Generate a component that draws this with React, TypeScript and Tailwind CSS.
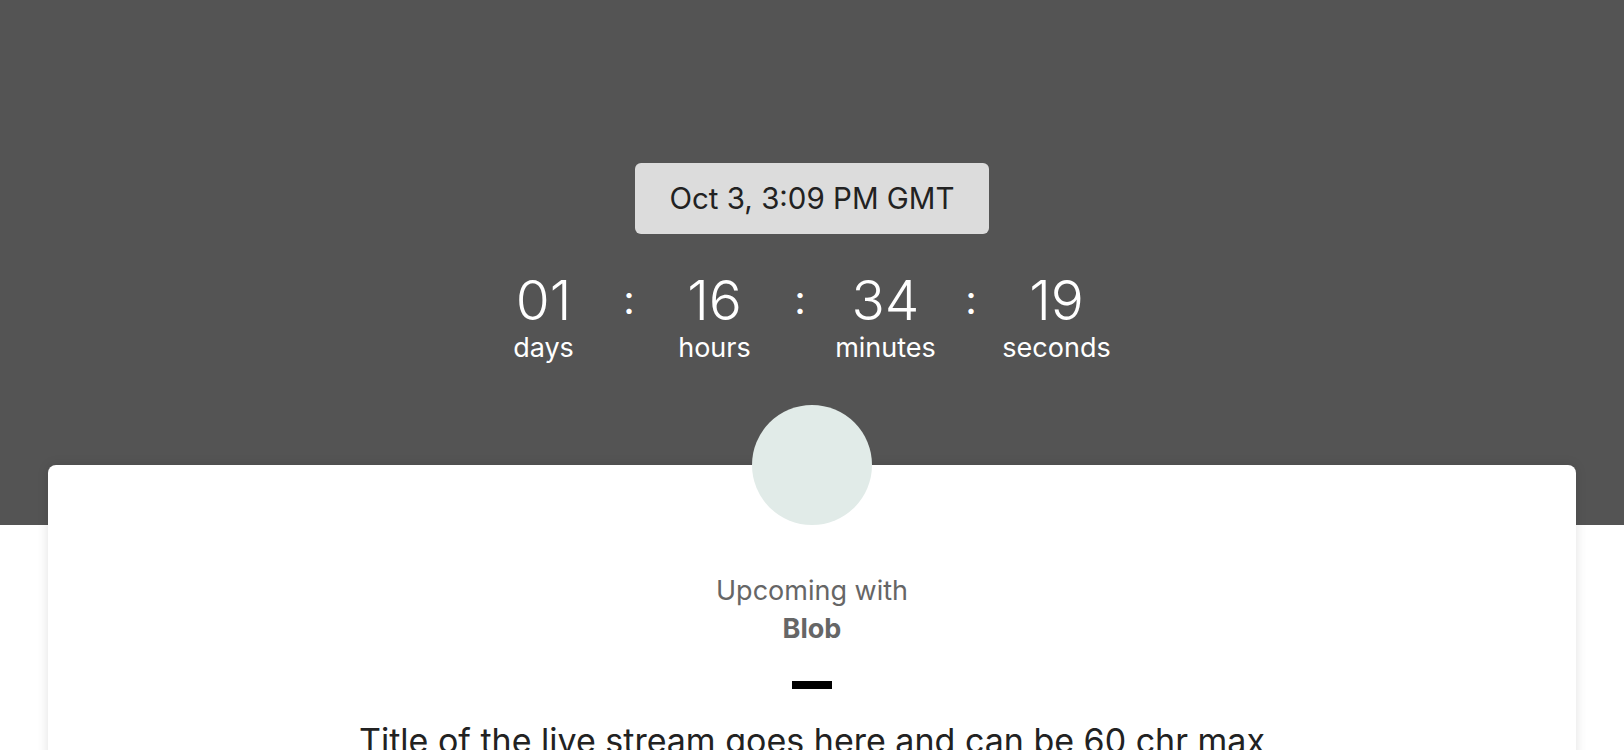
const font = { fontFamily: 'Inter, "Noto Sans", sans-serif' };

const units = [
  { value: '01', label: 'days' },
  { value: '16', label: 'hours' },
  { value: '34', label: 'minutes' },
  { value: '19', label: 'seconds' },
];

export default function App() {
  return (
    <div className="min-h-screen bg-white" style={font}>
      <div className="bg-[#545454] h-[525px] flex flex-col items-center pt-[163px]">
        <div className="w-[354px] h-[71px] rounded-md bg-[#dcdcdc] flex items-center justify-center text-[29.5px] text-[#222]">
          Oct 3, 3:09 PM GMT
        </div>
        <div className="flex items-start mt-[38px] pr-[24px] text-white">
          {units.map((u, i) => (
            <div key={u.label} className="flex items-start">
              {i > 0 && (
                <div className="w-[51px] text-center text-[40px] leading-[56px]">:</div>
              )}
              <div className="w-[120px] flex flex-col items-center">
                <span className="text-[55px] leading-[56px] font-light">{u.value}</span>
                <span className="text-[27px] leading-[30px] mt-[5px]">{u.label}</span>
              </div>
            </div>
          ))}
        </div>
      </div>
      <div className="mx-[48px] -mt-[60px] bg-white rounded-t-lg shadow-[0_0_12px_rgba(0,0,0,0.12)] flex flex-col items-center min-h-[400px]">
        <div className="w-[120px] h-[120px] rounded-full bg-[#e1ebe8] -mt-[60px]" />
        <div className="mt-[48px] text-[27px] leading-[36px] text-[#666]">Upcoming with</div>
        <div className="mt-[2px] text-[27px] leading-[36px] font-bold text-[#666]">Blob</div>
        <div className="w-[40px] h-[8px] bg-black mt-[34px]" />
        <div className="mt-[30px] text-[34px] leading-[44px] text-[#222]">
          Title of the live stream goes here and can be 60 chr max
        </div>
      </div>
    </div>
  );
}
